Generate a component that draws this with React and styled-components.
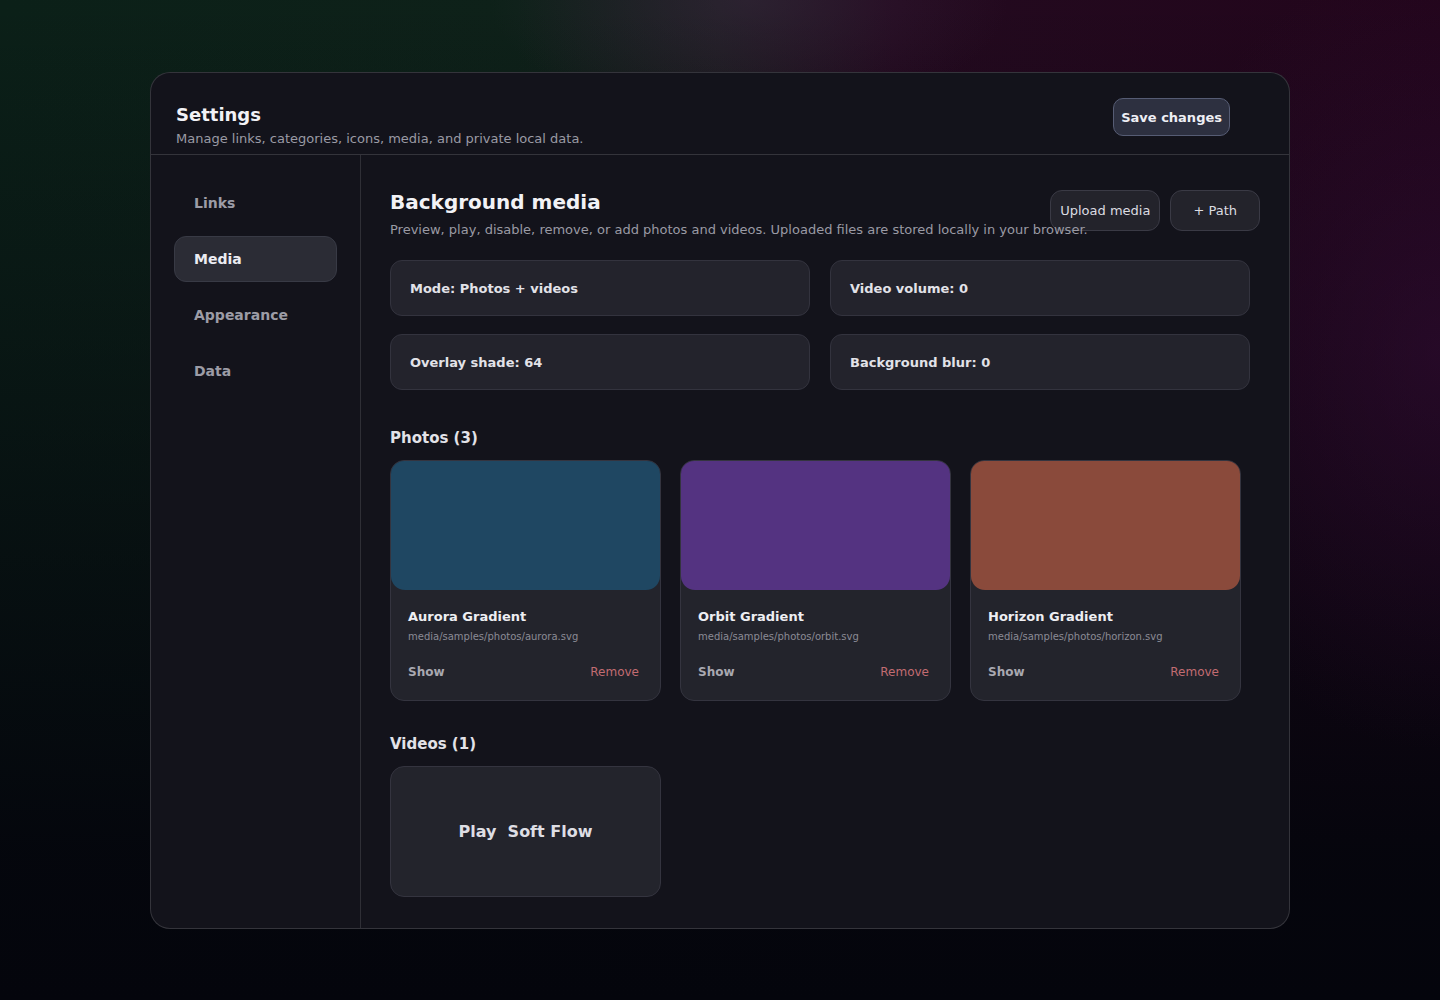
import React from 'react';
import styled, { createGlobalStyle } from 'styled-components';

const GlobalStyle = createGlobalStyle`
    html, body {
        margin: 0;
        padding: 0;
    }

    body {
        font-family: 'DejaVu Sans', 'Liberation Sans', sans-serif;
        color: #e6e6ec;
        background: #05060c;
    }
`;

const Page = styled.div`
    min-height: 1000px;
    box-sizing: border-box;
    padding: 72px 150px;
    background:
        radial-gradient(ellipse 260px 120px at 52% 0%, rgba(70, 50, 80, 0.35), transparent 100%),
        radial-gradient(ellipse 300px 400px at 100% 35%, rgba(55, 15, 60, 0.45), transparent 100%),
        linear-gradient(180deg, rgba(4, 5, 12, 0) 0%, rgba(4, 5, 12, 0.35) 35%, rgba(4, 5, 12, 0.95) 85%, #04050c 100%),
        linear-gradient(90deg, #0b2018 0%, #0e2119 36%, #1c1b1f 50%, #230a1f 62%, #22051b 100%);
`;

const Panel = styled.div`
    display: flex;
    flex-direction: column;
    height: 857px;
    box-sizing: border-box;
    border: 1px solid rgba(255, 255, 255, 0.14);
    border-radius: 20px;
    background: #13131b;
    overflow: hidden;
`;

const Header = styled.header`
    display: flex;
    align-items: flex-start;
    justify-content: space-between;
    height: 82px;
    box-sizing: border-box;
    padding: 31px 59px 0 25px;
    border-bottom: 1px solid rgba(255, 255, 255, 0.14);
    flex-shrink: 0;
`;

const Title = styled.h1`
    margin: 0;
    font-size: 18px;
    line-height: 22px;
    font-weight: 700;
    color: #f2f2f6;
`;

const Subtitle = styled.p`
    margin: 4px 0 0;
    font-size: 13px;
    line-height: 18px;
    color: #9a9aa4;
`;

const SaveButton = styled.button`
    height: 38px;
    padding: 0 7px;
    border: 1px solid #565c74;
    border-radius: 10px;
    background: #2d3040;
    color: #eeeef4;
    font-family: inherit;
    font-size: 13px;
    font-weight: 700;
    margin-top: -6px;
`;

const Body = styled.div`
    display: flex;
    flex: 1;
    min-height: 0;
`;

const Sidebar = styled.nav`
    display: flex;
    flex-direction: column;
    gap: 10px;
    width: 210px;
    box-sizing: border-box;
    padding: 25px 23px 0 23px;
    border-right: 1px solid rgba(255, 255, 255, 0.12);
    flex-shrink: 0;
`;

const NavItem = styled.div`
    height: 46px;
    box-sizing: border-box;
    display: flex;
    align-items: center;
    padding: 0 19px;
    border-radius: 12px;
    font-size: 14px;
    font-weight: 700;
    color: ${p => (p.$active ? '#ececf2' : '#9c9ca6')};
    background: ${p => (p.$active ? '#2b2c35' : 'transparent')};
    border: 1px solid ${p => (p.$active ? '#383a45' : 'transparent')};
`;

const Main = styled.main`
    flex: 1;
    padding: 26px 39px 0 29px;
    min-width: 0;
`;

const MainHead = styled.div`
    display: flex;
    align-items: flex-start;
    gap: 10px;
`;

const HeadText = styled.div`
    flex: 1;
    min-width: 0;
    white-space: nowrap;
    padding-top: 8px;
    position: relative;
    z-index: 1;
    pointer-events: none;
`;

const SectionTitle = styled.h2`
    margin: 0;
    font-size: 20px;
    line-height: 26px;
    font-weight: 700;
    color: #f2f2f6;
`;

const Description = styled.p`
    margin: 6px 0 0;
    font-size: 13px;
    line-height: 18px;
    color: #9a9aa4;
`;

const Actions = styled.div`
    display: flex;
    gap: 10px;
    margin: 9px -10px 0 0;
    flex-shrink: 0;
`;

const GhostButton = styled.button`
    height: 41px;
    padding: 0 ${p => (p.$wide ? '22px' : '9px')};
    border: 1px solid #3a3a45;
    border-radius: 12px;
    background: #23232b;
    color: #dcdce2;
    font-family: inherit;
    font-size: 13px;
`;

const TileGrid = styled.div`
    display: grid;
    grid-template-columns: 1fr 1fr;
    column-gap: 20px;
    row-gap: 18px;
    margin-top: 21px;
`;

const Tile = styled.div`
    height: 56px;
    box-sizing: border-box;
    display: flex;
    align-items: center;
    padding: 0 19px;
    border: 1px solid #33333e;
    border-radius: 12px;
    background: #23232c;
    font-size: 13px;
    font-weight: 700;
    color: #e2e2e8;
`;

const GroupTitle = styled.h3`
    margin: ${p => (p.$tight ? '33px' : '38px')} 0 12px;
    font-size: 15px;
    line-height: 20px;
    font-weight: 700;
    color: #e2e2e8;
`;

const CardRow = styled.div`
    display: grid;
    grid-template-columns: repeat(3, 271px);
    gap: 19px;
`;

const Card = styled.div`
    height: 241px;
    box-sizing: border-box;
    border: 1px solid #34343f;
    border-radius: 14px;
    background: #23242c;
    overflow: hidden;
    display: flex;
    flex-direction: column;
`;

const Preview = styled.div`
    height: 129px;
    border-radius: 0 0 14px 14px;
    background: ${p => p.$color};
`;

const CardBody = styled.div`
    padding: 19px 17px 0;
`;

const CardName = styled.div`
    font-size: 13px;
    font-weight: 700;
    line-height: 16px;
    color: #eeeef2;
`;

const CardPath = styled.div`
    margin-top: 6px;
    font-size: 10px;
    line-height: 12px;
    color: #8b8b95;
`;

const CardActions = styled.div`
    display: flex;
    justify-content: space-between;
    margin-top: 22px;
    font-size: 12px;
`;

const ShowLink = styled.span`
    font-weight: 700;
    color: #a8a8b0;
`;

const RemoveLink = styled.span`
    color: #c26c72;
    margin-right: 4px;
`;

const VideoCard = styled.div`
    width: 271px;
    height: 131px;
    box-sizing: border-box;
    display: flex;
    align-items: center;
    justify-content: center;
    border: 1px solid #34343f;
    border-radius: 14px;
    background: #23242c;
    font-size: 16px;
    font-weight: 700;
    color: #dedee4;
    white-space: pre;
`;

const photos = [
    { name: 'Aurora Gradient', path: 'media/samples/photos/aurora.svg', color: '#1f4762' },
    { name: 'Orbit Gradient', path: 'media/samples/photos/orbit.svg', color: '#543381' },
    { name: 'Horizon Gradient', path: 'media/samples/photos/horizon.svg', color: '#8a4a3b' }
];

const tiles = ['Mode: Photos + videos', 'Video volume: 0', 'Overlay shade: 64', 'Background blur: 0'];

const navItems = ['Links', 'Media', 'Appearance', 'Data'];

const App = () => (
    <Page>
        <GlobalStyle />
        <Panel>
            <Header>
                <div>
                    <Title>Settings</Title>
                    <Subtitle>Manage links, categories, icons, media, and private local data.</Subtitle>
                </div>
                <SaveButton>Save changes</SaveButton>
            </Header>
            <Body>
                <Sidebar>
                    {navItems.map(item => (
                        <NavItem key={item} $active={item === 'Media'}>
                            {item}
                        </NavItem>
                    ))}
                </Sidebar>
                <Main>
                    <MainHead>
                        <HeadText>
                            <SectionTitle>Background media</SectionTitle>
                            <Description>
                                Preview, play, disable, remove, or add photos and videos. Uploaded files are stored locally in your browser.
                            </Description>
                        </HeadText>
                        <Actions>
                            <GhostButton>Upload media</GhostButton>
                            <GhostButton $wide>+ Path</GhostButton>
                        </Actions>
                    </MainHead>

                    <TileGrid>
                        {tiles.map(t => (
                            <Tile key={t}>{t}</Tile>
                        ))}
                    </TileGrid>

                    <GroupTitle>Photos (3)</GroupTitle>
                    <CardRow>
                        {photos.map(photo => (
                            <Card key={photo.name}>
                                <Preview $color={photo.color} />
                                <CardBody>
                                    <CardName>{photo.name}</CardName>
                                    <CardPath>{photo.path}</CardPath>
                                    <CardActions>
                                        <ShowLink>Show</ShowLink>
                                        <RemoveLink>Remove</RemoveLink>
                                    </CardActions>
                                </CardBody>
                            </Card>
                        ))}
                    </CardRow>

                    <GroupTitle $tight>Videos (1)</GroupTitle>
                    <VideoCard>{'Play  Soft Flow'}</VideoCard>
                </Main>
            </Body>
        </Panel>
    </Page>
);

export default App;
